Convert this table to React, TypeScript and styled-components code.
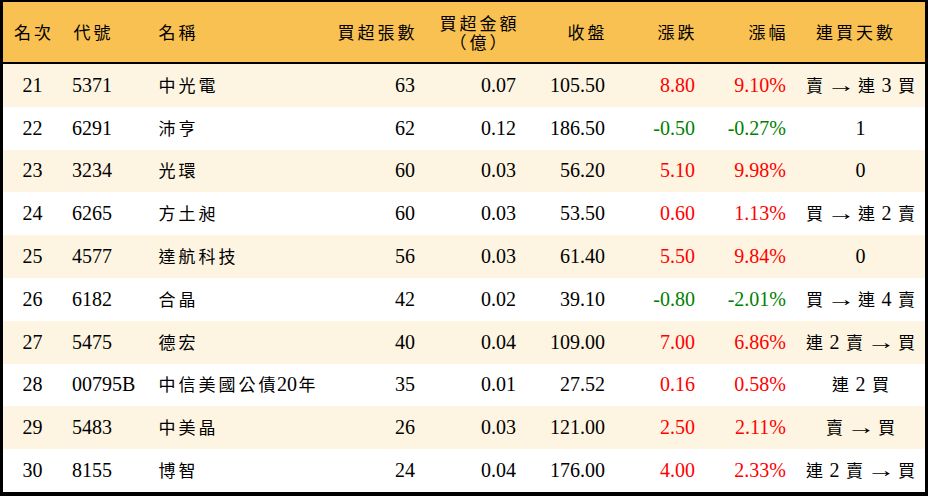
import styled, { createGlobalStyle } from "styled-components";

type Align = "left" | "center" | "right";
type Tone = "up" | "down";

interface Row {
  rank: number;
  code: string;
  name: string;
  lots: number;
  amount: string;
  close: string;
  change: string;
  pct: string;
  streak: string;
  tone: Tone;
}

const ROWS: Row[] = [
  { rank: 21, code: "5371", name: "中光電", lots: 63, amount: "0.07", close: "105.50", change: "8.80", pct: "9.10%", streak: "賣 → 連 3 買", tone: "up" },
  { rank: 22, code: "6291", name: "沛亨", lots: 62, amount: "0.12", close: "186.50", change: "-0.50", pct: "-0.27%", streak: "1", tone: "down" },
  { rank: 23, code: "3234", name: "光環", lots: 60, amount: "0.03", close: "56.20", change: "5.10", pct: "9.98%", streak: "0", tone: "up" },
  { rank: 24, code: "6265", name: "方土昶", lots: 60, amount: "0.03", close: "53.50", change: "0.60", pct: "1.13%", streak: "買 → 連 2 賣", tone: "up" },
  { rank: 25, code: "4577", name: "達航科技", lots: 56, amount: "0.03", close: "61.40", change: "5.50", pct: "9.84%", streak: "0", tone: "up" },
  { rank: 26, code: "6182", name: "合晶", lots: 42, amount: "0.02", close: "39.10", change: "-0.80", pct: "-2.01%", streak: "買 → 連 4 賣", tone: "down" },
  { rank: 27, code: "5475", name: "德宏", lots: 40, amount: "0.04", close: "109.00", change: "7.00", pct: "6.86%", streak: "連 2 賣 → 買", tone: "up" },
  { rank: 28, code: "00795B", name: "中信美國公債20年", lots: 35, amount: "0.01", close: "27.52", change: "0.16", pct: "0.58%", streak: "連 2 買", tone: "up" },
  { rank: 29, code: "5483", name: "中美晶", lots: 26, amount: "0.03", close: "121.00", change: "2.50", pct: "2.11%", streak: "賣 → 買", tone: "up" },
  { rank: 30, code: "8155", name: "博智", lots: 24, amount: "0.04", close: "176.00", change: "4.00", pct: "2.33%", streak: "連 2 賣 → 買", tone: "up" },
];

const COLUMNS = "59px 88px 180px 95px 101px 89px 90px 91px 129px";
const SPLIT = /([\u2E80-\u9FFF\uFF00-\uFFEF]+|→)/;
const HAN = /[\u2E80-\u9FFF\uFF00-\uFFEF]/;

// CJK runs get a smaller glyph centred in a 20px box, like the kai font in the source
const rich = (text: string) => (
  <Text>
    {text
      .split(SPLIT)
      .filter(Boolean)
      .map((part, i) =>
        part === "→" ? (
          <Arrow key={i}>→</Arrow>
        ) : HAN.test(part) ? (
          <Han key={i}>{part}</Han>
        ) : (
          <span key={i}>{part}</span>
        )
      )}
  </Text>
);

const App = () => (
  <>
    <GlobalStyle />
    <Frame>
      <Header>
        <Cell $align="center">{rich("名次")}</Cell>
        <Cell $align="left" $pl={10}>{rich("代號")}</Cell>
        <Cell $align="left" $pl={7}>{rich("名稱")}</Cell>
        <Cell $align="right" $pr={9}>{rich("買超張數")}</Cell>
        <Cell $align="center" $pl={5}>
          <Stack>
            {rich("買超金額")}
            {rich("（億）")}
          </Stack>
        </Cell>
        <Cell $align="right" $pr={9}>{rich("收盤")}</Cell>
        <Cell $align="right" $pr={9}>{rich("漲跌")}</Cell>
        <Cell $align="right" $pr={9}>{rich("漲幅")}</Cell>
        <Cell $align="center" $pr={12}>{rich("連買天數")}</Cell>
      </Header>
      {ROWS.map((row, i) => (
        <BodyRow key={row.rank} $alt={i % 2 === 0}>
          <Cell $align="center">{row.rank}</Cell>
          <Cell $align="left" $pl={10}>{row.code}</Cell>
          <Cell $align="left" $pl={7}>{rich(row.name)}</Cell>
          <Cell $align="right" $pr={10}>{row.lots}</Cell>
          <Cell $align="right" $pr={10}>{row.amount}</Cell>
          <Cell $align="right" $pr={10}>{row.close}</Cell>
          <Cell $align="right" $pr={10}><Value $tone={row.tone}>{row.change}</Value></Cell>
          <Cell $align="right" $pr={10}><Value $tone={row.tone}>{row.pct}</Value></Cell>
          <Cell $align="center">{rich(row.streak)}</Cell>
        </BodyRow>
      ))}
    </Frame>
  </>
);

export default App;

/** Styled components */

const GlobalStyle = createGlobalStyle`
  html, body {
    margin: 0;
    padding: 0;
    background: #fff;
  }
`;

const Frame = styled.div`
  width: 928px;
  height: 496px;
  box-sizing: border-box;
  border-style: solid;
  border-color: #000;
  border-width: 2px 3px 4px 3px;
  display: flex;
  flex-direction: column;
  font-family: "Liberation Serif", "Noto Sans CJK TC", serif;
  font-size: 20px;
  color: #000;
  background: #fff;
`;

const Header = styled.div`
  display: grid;
  grid-template-columns: ${COLUMNS};
  height: 60px;
  background: #f9c152;
  border-bottom: 2px solid #000;
`;

const BodyRow = styled.div<{ $alt: boolean }>`
  display: grid;
  grid-template-columns: ${COLUMNS};
  height: 42.8px;
  background: ${({ $alt }) => ($alt ? "#fdf5e1" : "#fff")};
`;

const Cell = styled.div<{ $align: Align; $pl?: number; $pr?: number }>`
  display: flex;
  align-items: center;
  justify-content: ${({ $align }) =>
    $align === "left" ? "flex-start" : $align === "right" ? "flex-end" : "center"};
  padding: 0 ${({ $pr = 0 }) => $pr}px 0 ${({ $pl = 0 }) => $pl}px;
  white-space: nowrap;
  min-width: 0;
`;

const Text = styled.span`
  white-space: pre;
`;

const Stack = styled.span`
  display: flex;
  flex-direction: column;
  align-items: center;
  gap: 1px;
  line-height: 18px;

  & > span {
    line-height: 18px;
  }
`;

const Han = styled.span`
  font-family: "Noto Sans CJK TC", sans-serif;
  font-size: 17px;
  line-height: 1;
  letter-spacing: 3px;
  padding-left: 1.5px;
  margin-right: -1.5px;
`;

const Arrow = styled.span`
  display: inline-block;
  transform: scaleX(1.45);
  margin: 0 1px;
`;

const Value = styled.span<{ $tone: Tone }>`
  color: ${({ $tone }) => ($tone === "up" ? "#ff0000" : "#008000")};
`;
